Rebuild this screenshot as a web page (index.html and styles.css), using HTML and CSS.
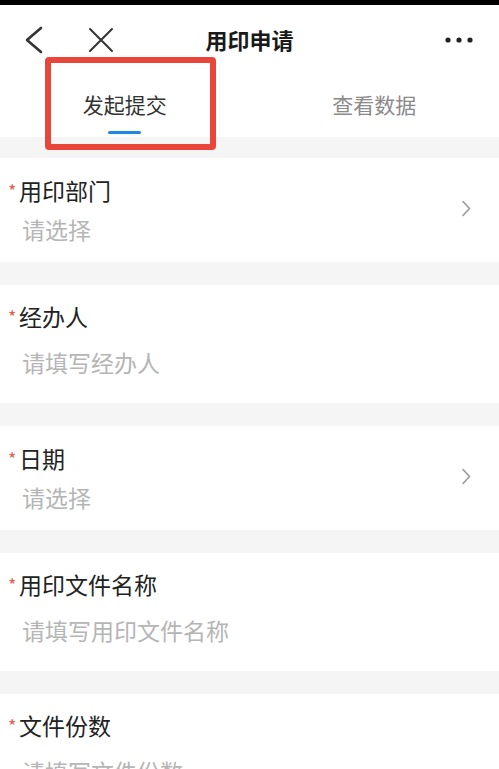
FILE: index.html
```html
<!DOCTYPE html>
<html lang="zh-CN">
<head>
  <meta charset="UTF-8">
  <meta name="viewport" content="width=device-width, initial-scale=1.0">
  <title>用印申请</title>
  <link rel="stylesheet" href="styles.css">
</head>
<body>
<div class="status-bar"></div>

<header class="nav-bar">
  <div class="nav-left">
    <svg class="icon-back" width="20" height="28" viewBox="0 0 20 28">
      <path d="M17 2 L3 14 L17 26" fill="none" stroke="#333" stroke-width="2.6" stroke-linecap="round" stroke-linejoin="round"/>
    </svg>
    <svg class="icon-close" width="26" height="26" viewBox="0 0 26 26">
      <path d="M2 2 L24 24 M24 2 L2 24" fill="none" stroke="#333" stroke-width="2" stroke-linecap="round"/>
    </svg>
  </div>
  <h1 class="nav-title">用印申请</h1>
  <div class="nav-right">
    <svg width="30" height="10" viewBox="0 0 30 10">
      <circle cx="4" cy="5" r="2.6" fill="#222"/>
      <circle cx="15" cy="5" r="2.6" fill="#222"/>
      <circle cx="26" cy="5" r="2.6" fill="#222"/>
    </svg>
  </div>
</header>

<nav class="tabs">
  <div class="tab active">
    <span>发起提交</span>
    <i class="tab-line"></i>
  </div>
  <div class="tab">
    <span>查看数据</span>
  </div>
</nav>

<!-- annotation frame around the first tab -->
<div class="highlight-box"></div>

<main class="form">
  <div class="field field-select">
    <div class="field-body">
      <div class="field-label"><span class="required">*</span>用印部门</div>
      <div class="field-value">请选择</div>
    </div>
    <svg class="arrow" width="10" height="17" viewBox="0 0 10 17">
      <path d="M2 1.5 L8.5 8.5 L2 15.5" fill="none" stroke="#9a9a9a" stroke-width="1.6" stroke-linecap="round" stroke-linejoin="round"/>
    </svg>
  </div>

  <div class="field field-text">
    <div class="field-body">
      <div class="field-label"><span class="required">*</span>经办人</div>
      <div class="field-input">请填写经办人</div>
    </div>
  </div>

  <div class="field field-select">
    <div class="field-body">
      <div class="field-label"><span class="required">*</span>日期</div>
      <div class="field-value">请选择</div>
    </div>
    <svg class="arrow" width="10" height="17" viewBox="0 0 10 17">
      <path d="M2 1.5 L8.5 8.5 L2 15.5" fill="none" stroke="#9a9a9a" stroke-width="1.6" stroke-linecap="round" stroke-linejoin="round"/>
    </svg>
  </div>

  <div class="field field-text">
    <div class="field-body">
      <div class="field-label"><span class="required">*</span>用印文件名称</div>
      <div class="field-input">请填写用印文件名称</div>
    </div>
  </div>

  <div class="field field-text">
    <div class="field-body">
      <div class="field-label"><span class="required">*</span>文件份数</div>
      <div class="field-input">请填写文件份数</div>
    </div>
  </div>
</main>
</body>
</html>
```

FILE: styles.css
```css
* {
  margin: 0;
  padding: 0;
  box-sizing: border-box;
  font-family: "Noto Sans CJK SC", "Noto Sans", sans-serif;
}

body {
  background-color: #f5f5f5;
  width: 499px;
  height: 769px;
  overflow: hidden;
  position: relative;
}

.status-bar {
  height: 5px;
  background-color: #000;
}

.nav-bar {
  height: 70px;
  background-color: #fff;
  display: grid;
  grid-template-columns: 1fr auto 1fr;
  align-items: center;
}

.nav-left {
  display: flex;
  align-items: center;
  gap: 44px;
  padding-left: 24px;
}

.nav-title {
  font-size: 22px;
  font-weight: 700;
  color: #1a1a1a;
  line-height: 30px;
  margin-top: -3px;
}

.nav-right {
  display: flex;
  justify-content: flex-end;
  padding-right: 25px;
}

.nav-right svg {
  display: block;
}

.tabs {
  display: flex;
  background-color: #fff;
  height: 62px;
}

.tab {
  flex: 1;
  display: flex;
  flex-direction: column;
  align-items: center;
  padding-top: 15px;
  font-size: 21px;
  line-height: 28px;
  color: #8a8a8a;
}

.tab.active {
  color: #333;
}

.tab-line {
  display: block;
  width: 33px;
  height: 3px;
  margin-top: 13px;
  border-radius: 2px;
  background-color: #1e88e5;
}

.highlight-box {
  position: absolute;
  left: 45px;
  top: 57px;
  width: 171px;
  height: 93px;
  border: 6px solid #e8463b;
  border-radius: 4px;
}

.form {
  display: flex;
  flex-direction: column;
  gap: 23px;
  padding-top: 21px;
}

.field {
  display: flex;
  align-items: center;
  background-color: #fff;
  padding-left: 8px;
}

.field-select {
  padding-top: 16px;
  padding-bottom: 17px;
}

.field-text {
  padding-top: 15px;
  padding-bottom: 17px;
}

.field-body {
  flex: 1;
}

.field-label {
  height: 32px;
  font-size: 23px;
  line-height: 32px;
  color: #222;
}

.required {
  display: inline-block;
  width: 11px;
  font-size: 18px;
  color: #e0604c;
  vertical-align: top;
  line-height: 32px;
}

.field-value {
  margin-top: 7px;
  padding-left: 14px;
  font-size: 23px;
  line-height: 32px;
  color: #b5b5b5;
}

.field-input {
  margin-top: 6px;
  padding-left: 14px;
  font-size: 23px;
  line-height: 48px;
  color: #b5b5b5;
}

.arrow {
  display: block;
  margin-right: 28px;
  margin-top: -3px;
}
```
